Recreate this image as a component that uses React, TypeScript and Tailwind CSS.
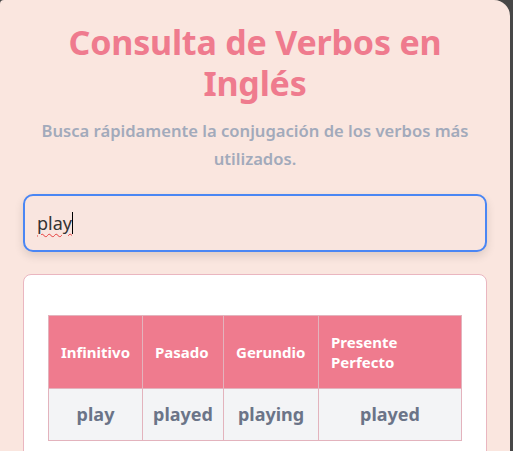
import { useState } from 'react'

const verb = {
  infinitivo: 'play',
  pasado: 'played',
  gerundio: 'playing',
  perfecto: 'played',
}

export default function App() {
  const [query] = useState('play')

  return (
    <div
      className="min-h-[451px] bg-[#474747] flex"
      style={{ fontFamily: '"Noto Sans", "Open Sans", sans-serif' }}
    >
      <div className="w-[510px] h-[451px] overflow-hidden bg-[#fae6df] rounded-tl-[4px] rounded-tr-2xl px-[23px] pt-[22px]">
        {/* título */}
        <h1 className="text-center text-[34px] leading-[41px] font-bold text-[#ef7b8e] tracking-[-0.2px]">
          Consulta de Verbos en Inglés
        </h1>
        <p className="mt-[13px] text-center text-[16.6px] leading-[28px] font-semibold text-[#a2aabb] px-2">
          Busca rápidamente la conjugación de los verbos más utilizados.
        </p>

        {/* buscador */}
        <div className="mt-[21px] h-[58px] rounded-[10px] border-2 border-[#4a86f4] bg-[#f9e5df] shadow-[0_4px_10px_rgba(0,0,0,0.12)] px-3 flex items-center">
          <span className="text-[18px] text-[#333] underline decoration-wavy decoration-[#e53e3e] decoration-1 underline-offset-[3px]">
            {query}
          </span>
          <span className="w-px h-[22px] bg-black" />
        </div>

        {/* resultados */}
        <div className="mt-[22px] bg-white border border-[#eab6c0] rounded-lg px-6 pt-[40px] pb-6">
          <table className="w-full border-collapse">
            <thead>
              <tr className="bg-[#ef7b8e] text-white text-left">
                <th className="w-[94px] border border-[#e3b3bd] px-3 py-4 text-[15px] leading-[20px] font-bold">Infinitivo</th>
                <th className="w-[81px] border border-[#e3b3bd] px-3 py-4 text-[15px] leading-[20px] font-bold">Pasado</th>
                <th className="w-[95px] border border-[#e3b3bd] px-3 py-4 text-[15px] leading-[20px] font-bold">Gerundio</th>
                <th className="border border-[#e3b3bd] px-3 py-4 text-[15px] leading-[20px] font-bold">
                  Presente
                  <br />
                  Perfecto
                </th>
              </tr>
            </thead>
            <tbody>
              <tr className="bg-[#f3f4f6] text-[#6b7488] text-center text-[18px] font-bold">
                <td className="border border-[#e3b3bd] py-3 leading-[27px]">{verb.infinitivo}</td>
                <td className="border border-[#e3b3bd] py-3 leading-[27px]">{verb.pasado}</td>
                <td className="border border-[#e3b3bd] py-3 leading-[27px]">{verb.gerundio}</td>
                <td className="border border-[#e3b3bd] py-3 leading-[27px]">{verb.perfecto}</td>
              </tr>
            </tbody>
          </table>
        </div>
      </div>
    </div>
  )
}
